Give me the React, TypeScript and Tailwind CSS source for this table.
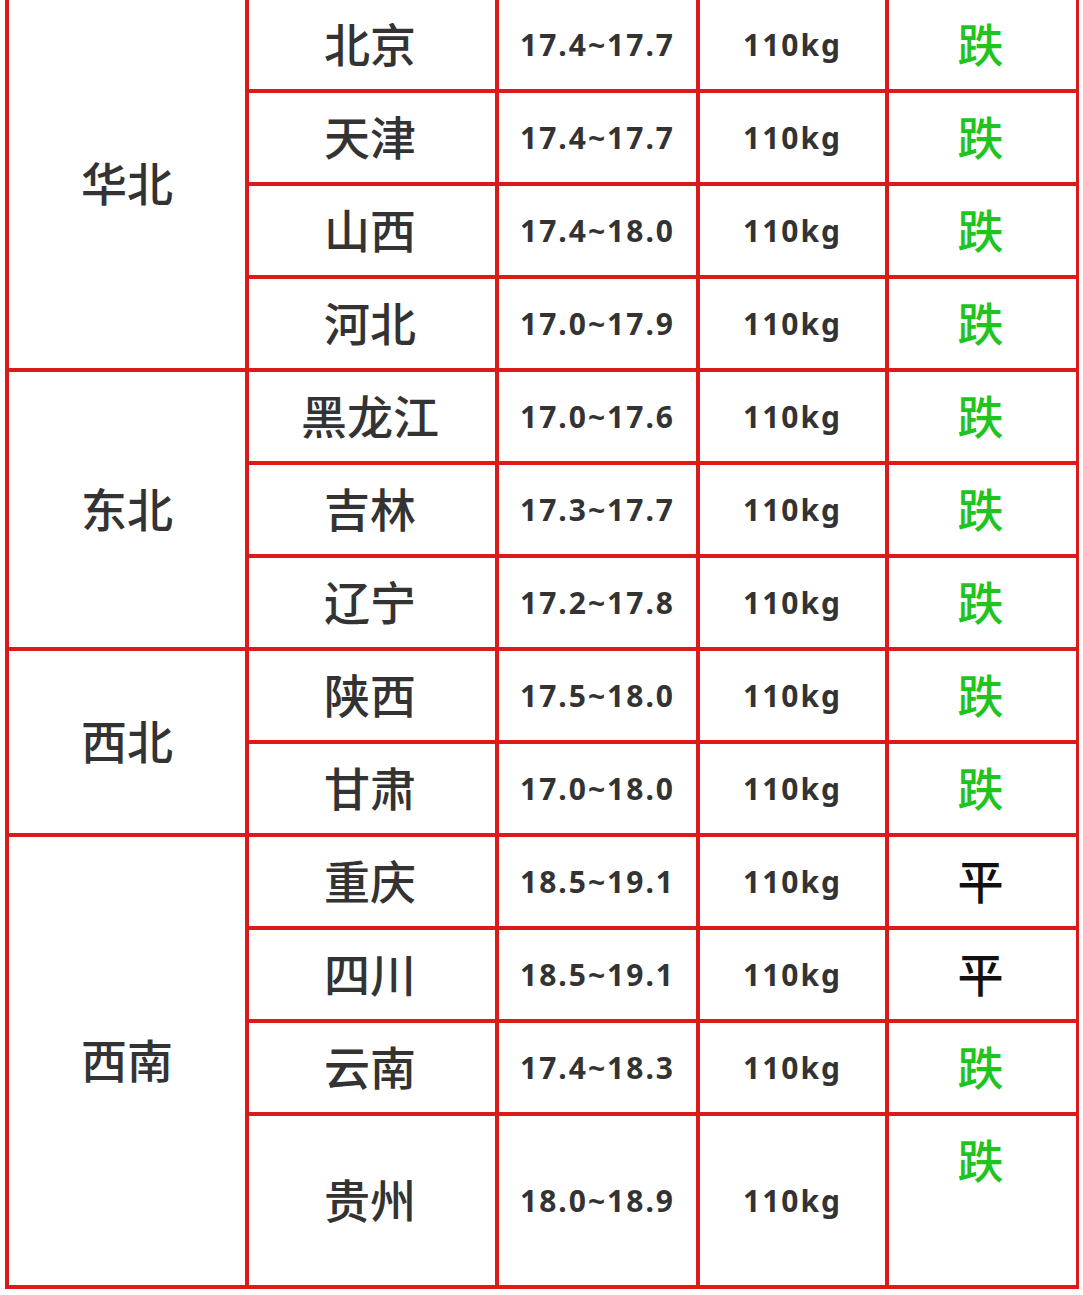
import React from 'react'

interface Row {
  region?: string
  span?: number
  city: string
  price: string
  trend: '跌' | '平'
}

const ROWS: Row[] = [
  { region: '华北', span: 4, city: '北京', price: '17.4~17.7', trend: '跌' },
  { city: '天津', price: '17.4~17.7', trend: '跌' },
  { city: '山西', price: '17.4~18.0', trend: '跌' },
  { city: '河北', price: '17.0~17.9', trend: '跌' },
  { region: '东北', span: 3, city: '黑龙江', price: '17.0~17.6', trend: '跌' },
  { city: '吉林', price: '17.3~17.7', trend: '跌' },
  { city: '辽宁', price: '17.2~17.8', trend: '跌' },
  { region: '西北', span: 2, city: '陕西', price: '17.5~18.0', trend: '跌' },
  { city: '甘肃', price: '17.0~18.0', trend: '跌' },
  { region: '西南', span: 4, city: '重庆', price: '18.5~19.1', trend: '平' },
  { city: '四川', price: '18.5~19.1', trend: '平' },
  { city: '云南', price: '17.4~18.3', trend: '跌' },
  { city: '贵州', price: '18.0~18.9', trend: '跌' },
]

const spanClass: Record<number, string> = {
  2: 'row-span-2',
  3: 'row-span-3',
  4: 'row-span-4',
}

const cjk = 'font-["Noto_Sans_CJK_SC","Noto_Sans",sans-serif]'
const num = 'font-["Noto_Sans","Liberation_Sans",sans-serif]'

export default function App() {
  return (
    <div className="w-[1083px] h-[1295px] bg-white overflow-hidden">
      <div className="ml-[5px] -mt-[4px] w-[1074px] bg-[#dd1a1a] p-[4px] grid gap-[4px] grid-cols-[236px_246px_197px_185px_187px] grid-rows-[repeat(12,89px)_169px]">
        {ROWS.map((row) => (
          <React.Fragment key={row.city}>
            {row.region && (
              <div
                className={`${spanClass[row.span ?? 2]} bg-white flex items-center justify-center pb-[5px] text-[46px] font-medium text-[#333] ${cjk}`}
              >
                {row.region}
              </div>
            )}
            <div className={`bg-white flex items-center justify-center pb-[5px] pr-[4px] text-[46px] font-medium text-[#333] ${cjk}`}>
              {row.city}
            </div>
            <div className={`bg-white flex items-center justify-center text-[30px] font-bold tracking-[2px] text-[#333] ${num}`}>
              {row.price}
            </div>
            <div className={`bg-white flex items-center justify-center text-[30px] font-bold tracking-[2px] text-[#333] ${num}`}>
              110kg
            </div>
            <div className="bg-white flex items-start justify-center">
              <div
                className={`h-[89px] flex items-center pb-[5px] pr-[4px] text-[46px] font-medium ${cjk} ${
                  row.trend === '跌' ? 'text-[#1fc41f]' : 'text-[#111]'
                }`}
              >
                {row.trend}
              </div>
            </div>
          </React.Fragment>
        ))}
      </div>
    </div>
  )
}
